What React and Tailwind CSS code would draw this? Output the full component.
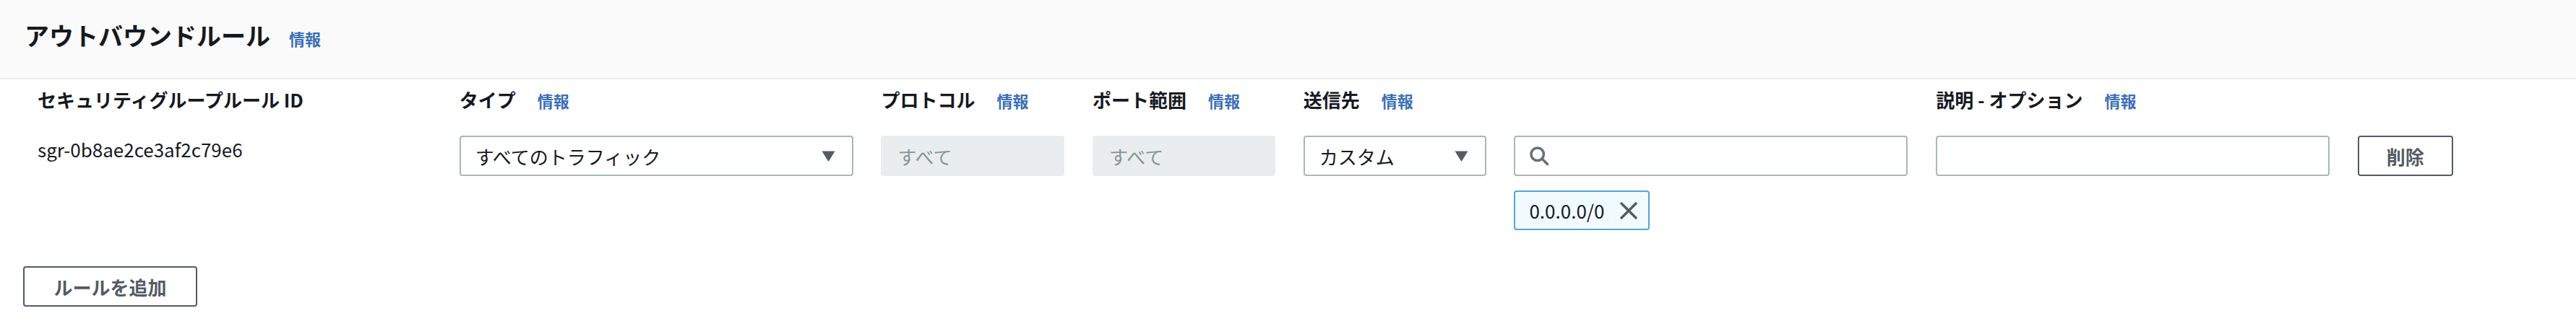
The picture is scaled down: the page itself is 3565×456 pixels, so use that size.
import React from "react";

const font = { fontFamily: '"Noto Sans CJK JP", "Noto Sans", sans-serif' };

const Info = ({ className = "ml-[30px]" }) => (
  <a className={`text-[22px] font-bold text-[#3b6fb6] ${className}`}>情報</a>
);

const Label = ({ text, info = true }) => (
  <div className="flex items-baseline h-[36px] leading-[36px]">
    <span className="text-[26px] font-bold text-[#16191f] whitespace-nowrap">{text}</span>
    {info && <Info />}
  </div>
);

const Caret = () => (
  <svg width="19" height="15" viewBox="0 0 19 15" className="shrink-0">
    <path d="M0.5 0.5 H18.5 L10.2 14 Q9.5 15 8.8 14 Z" fill="#545b64" />
  </svg>
);

const SelectBox = ({ value }) => (
  <div className="h-[56px] rounded-[4px] border-2 border-[#aab7b8] bg-white flex items-center justify-between pl-[20px] pr-[23px]">
    <span className="text-[26px] text-[#16191f] whitespace-nowrap">{value}</span>
    <Caret />
  </div>
);

const Disabled = ({ value }) => (
  <div className="h-[56px] rounded-[4px] border-2 border-[#eaeded] bg-[#eaeded] flex items-center pl-[21px]">
    <span className="text-[26px] text-[#879596]">{value}</span>
  </div>
);

const SearchIcon = () => (
  <svg width="28" height="28" viewBox="0 0 16 16" fill="none" stroke="#687078" strokeWidth="2" strokeLinecap="round">
    <circle cx="6.7" cy="6.7" r="5" />
    <path d="M10.4 10.4 L14.6 14.6" />
  </svg>
);

const CloseIcon = () => (
  <svg width="26" height="26" viewBox="0 0 26 26" fill="none" stroke="#545b64" strokeWidth="3.4">
    <path d="M2 2 L24 24 M24 2 L2 24" />
  </svg>
);

export default function App() {
  return (
    <div className="w-[3565px] h-[456px] bg-white text-[#16191f]" style={font}>
      {/* ヘッダー */}
      <div className="h-[110px] bg-[#fafafa] border-b-2 border-[#eaeded] pt-[27px] pl-[34px] flex items-baseline">
        <h2 className="text-[34px] leading-[44px] font-bold text-[#16191f]">アウトバウンドルール</h2>
        <Info className="ml-[26px]" />
      </div>

      {/* ルール行 */}
      <div className="pl-[52px] pt-[10px] grid grid-cols-[545px_545px_254px_253px_253px_545px_545px_132px] gap-x-[38.7px] gap-y-[32px]">
        <Label text="セキュリティグループルール ID" info={false} />
        <Label text="タイプ" />
        <Label text="プロトコル" />
        <Label text="ポート範囲" />
        <Label text="送信先" />
        <div />
        <Label text="説明 - オプション" />
        <div />

        <div className="text-[26px] leading-[38px] text-[#16191f]">sgr-0b8ae2ce3af2c79e6</div>
        <SelectBox value="すべてのトラフィック" />
        <Disabled value="すべて" />
        <Disabled value="すべて" />
        <SelectBox value="カスタム" />
        <div className="flex flex-col items-start">
          <div className="w-full h-[56px] rounded-[4px] border-2 border-[#aab7b8] bg-white flex items-center pl-[19px]">
            <SearchIcon />
          </div>
          <div className="mt-[20px] h-[55px] rounded-[4px] border-2 border-[#5ca3d1] bg-[#f1faff] flex items-center pl-[19px] pr-[14px] gap-[21px]">
            <span className="text-[26px] text-[#16191f]">0.0.0.0/0</span>
            <CloseIcon />
          </div>
        </div>
        <div className="h-[56px] rounded-[4px] border-2 border-[#aab7b8] bg-white" />
        <button className="h-[56px] rounded-[4px] border-2 border-[#545b64] bg-white text-[26px] font-bold text-[#545b64]">
          削除
        </button>
      </div>

      {/* 追加ボタン */}
      <div className="pl-[32px] mt-[50px]">
        <button className="w-[241px] h-[56px] rounded-[4px] border-2 border-[#545b64] bg-white text-[26px] font-bold text-[#545b64]">
          ルールを追加
        </button>
      </div>
    </div>
  );
}
